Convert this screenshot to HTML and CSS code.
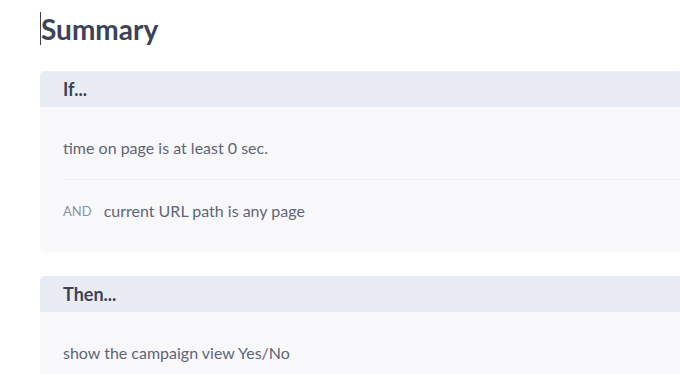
FILE: index.html
```html
<!DOCTYPE html>
<html lang="en">

<head>
    <meta charset="UTF-8">
    <meta name="viewport" content="width=device-width, initial-scale=1.0">
    <title>Summary</title>
    <link rel="stylesheet" href="styles.css">
</head>

<body>
    <div class="summary">
        <h1 class="summary-title"><span class="caret"></span>Summary</h1>

        <!-- 条件 -->
        <div class="rule-card">
            <div class="rule-head">If...</div>
            <div class="rule-body">
                <div class="rule-row">time on page is at least 0 sec.</div>
                <div class="rule-row"><span class="rule-and">AND</span>current URL path is any page</div>
            </div>
        </div>

        <!-- 动作 -->
        <div class="rule-card">
            <div class="rule-head">Then...</div>
            <div class="rule-body">
                <div class="rule-row">show the campaign view Yes/No</div>
            </div>
        </div>
    </div>
</body>

</html>
```

FILE: styles.css
```css
body {
    margin: 0;
    background: #fff;
    font-family: Lato, "Open Sans", sans-serif;
    overflow: hidden;
}

.summary {
    width: 700px;
    padding: 12px 0 0 40px;
}

.summary-title {
    margin: 0 0 26px;
    display: flex;
    align-items: center;
    height: 33px;
    font-size: 28px;
    font-weight: 700;
    color: #3c4257;
}

/* 光标 */
.caret {
    width: 1px;
    height: 33px;
    background: #3c4257;
}

.rule-card {
    border-radius: 5px;
    overflow: hidden;
    background: #f9f9fc;
    margin-bottom: 24px;
}

.rule-head {
    height: 36px;
    line-height: 36px;
    padding-left: 23px;
    background: #e9ecf4;
    font-size: 18px;
    font-weight: 700;
    color: #3d4356;
}

.rule-body {
    padding: 10px 0 10px 23px;
}

.rule-row {
    padding: 21px 0;
    line-height: 20px;
    display: flex;
    align-items: center;
    font-size: 16px;
    color: #5f6577;
}

.rule-row + .rule-row {
    border-top: 1px solid #eceef2;
}

.rule-and {
    font-size: 13px;
    color: #8a91a3;
    margin-right: 12px;
}
```
